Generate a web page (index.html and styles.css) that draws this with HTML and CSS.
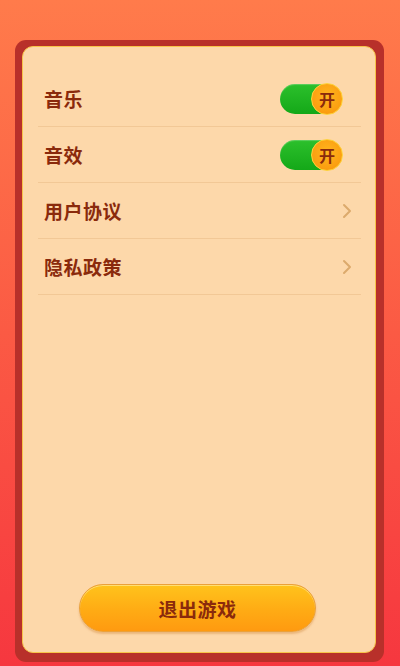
FILE: index.html
```html
<!DOCTYPE html>
<html lang="zh-CN">
<head>
<meta charset="utf-8">
<link rel="stylesheet" href="styles.css">
</head>
<body>
<div class="screen">
  <div class="frame">
    <div class="panel">
      <div class="list">
        <div class="row">
          <span class="label">音乐</span>
          <div class="toggle"><span class="knob">开</span></div>
        </div>
        <div class="row">
          <span class="label">音效</span>
          <div class="toggle"><span class="knob">开</span></div>
        </div>
        <div class="row">
          <span class="label">用户协议</span>
          <svg class="chev" width="12" height="18" viewBox="0 0 12 18"><path d="M3 3 L9 9 L3 15" fill="none" stroke="#dcaa6c" stroke-width="2" stroke-linecap="round" stroke-linejoin="round"/></svg>
        </div>
        <div class="row">
          <span class="label">隐私政策</span>
          <svg class="chev" width="12" height="18" viewBox="0 0 12 18"><path d="M3 3 L9 9 L3 15" fill="none" stroke="#dcaa6c" stroke-width="2" stroke-linecap="round" stroke-linejoin="round"/></svg>
        </div>
      </div>
      <div class="exit">退出游戏</div>
    </div>
  </div>
</div>
</body>
</html>
```
FILE: styles.css
```css
html, body { margin: 0; padding: 0; }
body {
  width: 400px;
  height: 666px;
  overflow: hidden;
  font-family: "Noto Sans CJK SC", "Noto Sans", sans-serif;
}
.screen {
  width: 400px;
  height: 666px;
  background: linear-gradient(180deg, #ff7b4b 0%, #fb5a44 50%, #f6373f 100%);
  padding: 40px 16px 4px 15px;
  box-sizing: border-box;
  display: flex;
}
.frame {
  flex: 1;
  background: #b8302a;
  border-radius: 11px;
  padding: 6px 8px 9px 7px;
  display: flex;
}
.panel {
  flex: 1;
  background: #fdd8aa;
  border: 1.5px solid #f7c44a;
  border-radius: 11px;
  display: flex;
  flex-direction: column;
  padding: 24px 14px 20px 15px;
}
.list { flex: 1; display: flex; flex-direction: column; }
.row {
  height: 55px;
  border-bottom: 1px solid #f2c896;
  display: flex;
  align-items: center;
  justify-content: space-between;
  padding: 0 6px 0 6px;
}
.label {
  color: #8a2a0c;
  font-size: 19px;
  font-weight: 700;
  letter-spacing: 0.5px;
}
.toggle {
  width: 62px;
  height: 30px;
  border-radius: 15px;
  background: linear-gradient(180deg, #2cc02c, #14a818);
  display: flex;
  align-items: center;
  justify-content: flex-end;
  box-shadow: inset 0 1px 1px rgba(255,255,255,0.25);
  margin-right: 13px;
}
.knob {
  width: 32px;
  height: 32px;
  margin-right: -1px;
  flex-shrink: 0;
  border-radius: 50%;
  background: radial-gradient(circle at 50% 40%, #ffb51e 0%, #fb9e10 70%, #f08a0c 100%);
  border: 1.5px solid #ffd23a;
  box-sizing: border-box;
  color: #8a2a0c;
  font-size: 16px;
  font-weight: 700;
  display: flex;
  align-items: center;
  justify-content: center;
}
.chev { margin-right: 2px; }
.exit {
  align-self: center;
  width: 237px;
  height: 48px;
  border-radius: 24px;
  background: linear-gradient(180deg, #ffc31c 0%, #ffab14 55%, #ff9a10 100%);
  border: 1px solid #eba13a;
  box-sizing: border-box;
  box-shadow: 0 2px 2px rgba(200,120,40,0.35), inset 0 1px 0 rgba(255,230,140,0.8);
  color: #8a2a0c;
  font-size: 19px;
  font-weight: 700;
  display: flex;
  align-items: center;
  justify-content: center;
  letter-spacing: 0.5px;
  margin-left: -4px;
}
```
